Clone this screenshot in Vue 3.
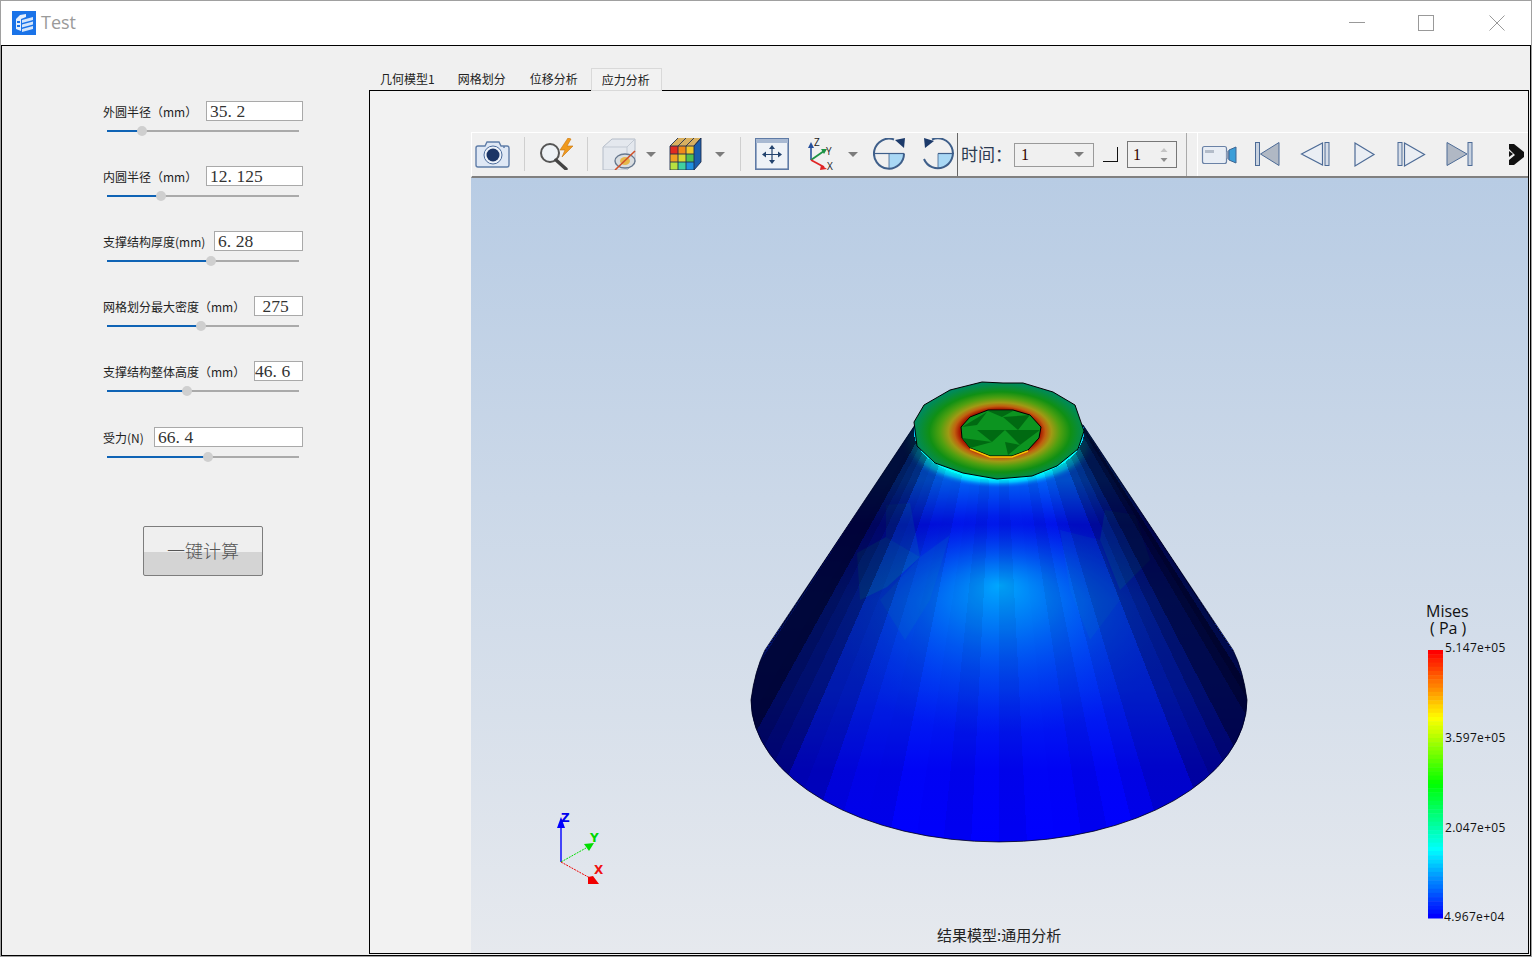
<template>
  <div class="window">
    <header class="titlebar">
      <svg class="app-icon" viewBox="0 0 24 24" width="24" height="24">
        <rect width="24" height="24" fill="#1a73e8" />
        <path d="M4 8 L8 4 L14 3 L14 6 L9 8 L9 20 L4 18 Z" fill="#e6f0fd" />
        <path d="M5 10h3v2h-3zM5 14h3v2h-3z" fill="#1a73e8" />
        <path d="M10 9 L21 6 L21 9 L10 12 Z M10 13.500 L21 10.500 L21 13.500 L10 16.500 Z M10 18 L21 15 L21 18 L10 21 Z" fill="#d5e6fb" />
      </svg>
      <span class="app-title">Test</span>
      <div class="win-controls">
        <svg viewBox="0 0 16 16" width="16" height="16"><path d="M0 7.5H16" stroke="#999" fill="none" /></svg>
        <svg viewBox="0 0 16 16" width="16" height="16"><rect x="0.5" y="0.5" width="15" height="15" stroke="#999" fill="none" /></svg>
        <svg viewBox="0 0 16 16" width="16" height="16"><path d="M0.5 0.5L15.5 15.5M15.5 0.5L0.5 15.5" stroke="#999" fill="none" /></svg>
      </div>
    </header>

    <div class="client">
      <aside class="params">
        <div v-for="p in params" :key="p.label" class="param">
          <div class="param-head">
            <label class="param-label">{{ p.label }}</label>
            <div class="param-input" :style="{ width: p.inputWidth + 'px', paddingLeft: p.pad + 'px' }">
              <template v-if="p.frac">{{ p.whole }}<span class="pt">.</span>{{ p.frac }}</template>
              <template v-else>{{ p.whole }}</template>
            </div>
          </div>
          <div class="slider" :style="{ '--pos': p.pos + 'px' }">
            <span class="thumb"></span>
          </div>
        </div>
        <button class="calc-btn">一键计算</button>
      </aside>

      <section class="results">
        <nav class="tabs">
          <span v-for="t in tabs" :key="t" class="tab" :class="{ active: t === '应力分析' }">{{ t }}</span>
        </nav>
        <div class="pane">
          <div class="viewer">
            <div class="toolbar">
              <div class="tools">
                <svg viewBox="475 138 36 32" width="36" height="32">
                  <path d="M478 146h7l2-4h12l2 4h6a2 2 0 0 1 2 2v17a2 2 0 0 1-2 2h-29a2 2 0 0 1-2-2v-17a2 2 0 0 1 2-2z" fill="#dfe8f5" stroke="#5f7da8" stroke-width="1.4" />
                  <circle cx="493" cy="155" r="9" fill="#eef3fa" stroke="#4c6c9c" />
                  <circle cx="493" cy="155" r="6.5" fill="#1b3566" />
                  <circle cx="504" cy="147" r="1" fill="#5f7da8" />
                </svg>
                <i class="sep"></i>
                <svg viewBox="537 138 40 32" width="40" height="32">
                  <circle cx="550" cy="153" r="9" fill="#eef2f6" stroke="#555" stroke-width="2" />
                  <path d="M556 160L566 169" stroke="#444" stroke-width="3.4" stroke-linecap="round" />
                  <path d="M568 138L560 150h5l-3 7 11-11h-6l4-7z" fill="#f09a1c" stroke="#c8730d" stroke-width=".6" />
                </svg>
                <i class="sep"></i>
                <svg viewBox="600 138 38 32" width="38" height="32">
                  <path d="M603 147l9-8h23v23l-8 8h-24z" fill="#e4e8ee" stroke="#b4bcc8" />
                  <path d="M603 147h24v23M627 147l8-8" fill="none" stroke="#c2c9d3" />
                  <ellipse cx="625" cy="161" rx="10" ry="7" fill="#d9dde0" stroke="#67788f" stroke-width="1.4" />
                  <ellipse cx="625" cy="161" rx="5" ry="4" fill="#e6b84c" />
                  <path d="M615 170L635 151" stroke="#d0512a" stroke-width="1.6" />
                </svg>
                <svg class="drop drop-a" viewBox="0 0 10 5" width="10" height="5"><path d="M0 0h10l-5 5z" fill="#7c7c7c" /></svg>
                <svg viewBox="670 138 36 32" width="36" height="32">
                  <path d="M672 146l8-8h23l-7 8z" fill="#d8b060" />
                  <path d="M696 146l7-8v24l-7 8z" fill="#1b5fae" />
                  <rect v-for="c in cubeCells" :key="c.x + '-' + c.y" :x="c.x" :y="c.y" width="8" height="8" :fill="c.fill" />
                  <path d="M672 146h24v24h-24zM680 146v24M688 146v24M672 154h24M672 162h24M680 138l-8 8M688 138l-8 8M696 138l-8 8M703 138l-7 8M696 146l7-8v24l-7 8" fill="none" stroke="#20304e" stroke-width=".9" />
                </svg>
                <svg class="drop drop-b" viewBox="0 0 10 5" width="10" height="5"><path d="M0 0h10l-5 5z" fill="#7c7c7c" /></svg>
                <i class="sep"></i>
                <svg viewBox="755 138 34 32" width="34" height="32">
                  <rect x="755.8" y="138.8" width="32.4" height="30.4" fill="#eef2f7" stroke="#5f7ba6" stroke-width="1.6" />
                  <rect x="756" y="139" width="32" height="4" fill="#a8b9d2" />
                  <path d="M772 148v13M765 154.500h14" stroke="#23436e" stroke-width="1.2" />
                  <path d="M772 145l-3 4h6zM772 164l-3-4h6zM762 154.500l4-3v6zM782 154.500l-4-3v6z" fill="#23436e" />
                </svg>
                <svg class="axes-icon" viewBox="806 136 34 36" width="34" height="36">
                  <path d="M811 160V145" stroke="#27509c" stroke-width="1.6" />
                  <path d="M811 142l-3 6h6z" fill="#27509c" />
                  <path d="M811 160L824 151" stroke="#1d9345" stroke-width="1.8" />
                  <path d="M827 149l-6 0 3 5z" fill="#1d9345" />
                  <path d="M811 160L824 167" stroke="#e02525" stroke-width="1.8" />
                  <path d="M827 169l-6-4-1 5z" fill="#e02525" />
                  <text x="814" y="146" class="axis-tiny">Z</text>
                  <text x="826" y="155" class="axis-tiny">Y</text>
                  <text x="827" y="170" class="axis-tiny">X</text>
                </svg>
                <svg class="drop drop-c" viewBox="0 0 10 5" width="10" height="5"><path d="M0 0h10l-5 5z" fill="#7c7c7c" /></svg>
                <svg class="rot-a" viewBox="872 138 34 32" width="34" height="32">
                  <path d="M888 153.500H903A15 15 0 0 1 888 168.500Z" fill="#a9d8f5" />
                  <path d="M873 153.500H903" stroke="#3f5f8a" stroke-width="1.2" />
                  <path d="M888 153.500V168" stroke="#3f5f8a" stroke-width=".8" />
                  <path d="M893 139.500A15 15 0 1 0 903 153.500" fill="none" stroke="#3f5f8a" stroke-width="2" />
                  <path d="M903 148l1-10-10 2z" fill="#1c3a6a" />
                </svg>
                <svg class="rot-b" viewBox="921 138 34 32" width="34" height="32">
                  <path d="M937 153.500H952A15 15 0 0 1 937 168.500Z" fill="#a9d8f5" />
                  <path d="M937 153.500H953" stroke="#3f5f8a" stroke-width="1.2" />
                  <path d="M937 153.500V168" stroke="#3f5f8a" stroke-width=".8" />
                  <path d="M931 139.500A15 15 0 1 1 923 159" fill="none" stroke="#3f5f8a" stroke-width="2" />
                  <path d="M924 148l-1-10 10 3z" fill="#1c3a6a" />
                </svg>
              </div>

              <div class="time-group">
                <span class="time-label">时间：</span>
                <div class="combo">
                  <span>1</span>
                  <svg viewBox="0 0 10 5" width="10" height="5"><path d="M0 0h10l-5 5z" fill="#7c7c7c" /></svg>
                </div>
                <span class="step-mark"></span>
                <div class="spin">
                  <span>1</span>
                  <svg viewBox="0 0 8 14" width="8" height="14"><path d="M4 0l3.500 4h-7z" fill="#c4c4c4" /><path d="M4 14l3.500-4h-7z" fill="#8c8c8c" /></svg>
                </div>
              </div>

              <div class="player">
                <svg viewBox="1202 138 37 32" width="37" height="32">
                  <rect x="1203.500" y="146.500" width="24" height="17" rx="2" fill="#e8edf4" stroke="#6a82a6" stroke-width="1.2" />
                  <rect x="1206" y="150" width="9" height="3" fill="#b3bcc9" />
                  <path d="M1227 152l3-2v10l-3-2z" fill="#8a9ab4" />
                  <path d="M1230 150l7-3v16l-7-3z" fill="#3b9ed8" stroke="#3f6592" />
                </svg>
                <svg class="nav-first" viewBox="1254 138 28 32" width="28" height="32">
                  <rect x="1256.500" y="142.500" width="4" height="23" fill="#c8d2e0" stroke="#4d6b96" />
                  <path d="M1261.500 154L1280 142.500V165.500Z" fill="#b0b8c4" stroke="#4d6b96" />
                </svg>
                <svg class="nav-prev" viewBox="1301 138 30 32" width="30" height="32">
                  <path d="M1302.500 154L1323.500 143V165Z" fill="#eaeef4" stroke="#4d6b96" stroke-width="1.2" />
                  <rect x="1326" y="142.500" width="4" height="23" fill="#d6dde8" stroke="#4d6b96" />
                </svg>
                <svg class="nav-play" viewBox="1354 138 23 32" width="23" height="32">
                  <path d="M1356 143L1375 154.500L1356 166Z" fill="#eaeef4" stroke="#4d6b96" stroke-width="1.2" />
                </svg>
                <svg class="nav-next" viewBox="1398 138 29 32" width="29" height="32">
                  <rect x="1399" y="142.500" width="4" height="23" fill="#d6dde8" stroke="#4d6b96" />
                  <path d="M1405.500 143L1425.500 154.500L1405.500 166Z" fill="#eaeef4" stroke="#4d6b96" stroke-width="1.2" />
                </svg>
                <svg class="nav-last" viewBox="1447 138 27 32" width="27" height="32">
                  <path d="M1448 142.500L1468 154L1448 165.500Z" fill="#b0b8c4" stroke="#4d6b96" />
                  <rect x="1469" y="142.500" width="4" height="23" fill="#c8d2e0" stroke="#4d6b96" />
                </svg>
                <svg class="nav-more" viewBox="1510 138 15 32" width="15" height="32">
                  <path d="M1510 144h5l10 8v5l-10 8h-5v-5l6-5-6-6z" fill="#111" />
                  <path d="M1510 151l4 3-4 3z" fill="#111" />
                </svg>
              </div>
            </div>

            <div class="canvas">
              <svg viewBox="471 178 1057 775" width="1057" height="775" class="scene">
                <defs>
                  <clipPath id="coneClip"><path :d="conePath" /></clipPath>
                  <linearGradient id="coneBase" gradientUnits="userSpaceOnUse" x1="0" y1="440" x2="0" y2="842">
                    <stop offset="0.1" stop-color="#0060f4" />
                    <stop offset="0.21" stop-color="#0010ea" />
                    <stop offset="0.4" stop-color="#0034ee" />
                    <stop offset="0.62" stop-color="#0026f0" />
                    <stop offset="0.82" stop-color="#0004f6" />
                    <stop offset="1" stop-color="#0000ff" />
                  </linearGradient>
                  <radialGradient id="coneGlow" gradientUnits="userSpaceOnUse" cx="0" cy="0" fx="0" fy="-0.36" r="1" gradientTransform="translate(1000 625) scale(175 110)">
                    <stop offset="0" stop-color="#00a8ff" />
                    <stop offset="0.3" stop-color="#0090f8" stop-opacity="0.7" />
                    <stop offset="1" stop-color="#0040f0" stop-opacity="0" />
                  </radialGradient>
                  <radialGradient id="ringGlow" gradientUnits="userSpaceOnUse" cx="0" cy="0" r="1" gradientTransform="translate(999 442) scale(100 46)">
                    <stop offset="0.8" stop-color="#00ffff" />
                    <stop offset="0.88" stop-color="#00c0ff" />
                    <stop offset="1" stop-color="#0060f4" stop-opacity="0" />
                  </radialGradient>
                  <radialGradient id="ringFill" gradientUnits="userSpaceOnUse" cx="0" cy="0" r="1" gradientTransform="translate(1000 432) scale(86 49)">
                    <stop offset="0.47" stop-color="#a81800" />
                    <stop offset="0.53" stop-color="#c06010" />
                    <stop offset="0.6" stop-color="#a09a14" />
                    <stop offset="0.7" stop-color="#50a010" />
                    <stop offset="0.82" stop-color="#109014" />
                    <stop offset="1" stop-color="#008a5c" />
                  </radialGradient>
                </defs>

                <g clip-path="url(#coneClip)">
                  <rect x="740" y="380" width="520" height="470" fill="url(#coneBase)" />
                  <rect x="740" y="490" width="520" height="300" fill="url(#coneGlow)" />
                  <rect x="860" y="400" width="280" height="100" fill="url(#ringGlow)" />
                  <polygon v-for="(f, i) in facets" :key="'f' + i" :points="f.points" :fill="f.fill" :opacity="f.opacity" />
                  <g shape-rendering="crispEdges">
                    <polygon v-for="s in strips" :key="s.id" :points="s.points" fill="#00001c" :opacity="s.alpha" />
                  </g>
                </g>
                <path :d="conePath" fill="none" stroke="#000018" stroke-width="0.8" />

                <polygon :points="ringOuter" fill="url(#ringFill)" stroke="#000" stroke-width="1" />
                <polygon :points="hole" fill="#0c9420" stroke="#000" stroke-width="1" />
                <polygon v-for="(t, i) in holeDark" :key="'h' + i" :points="t" fill="#006a12" />
                <polyline points="970,449 990,457 1012,457 1028,451" fill="none" stroke="#f8c800" stroke-width="1.4" />

                <g class="triad">
                  <path d="M561 862V826" stroke="#0000ff" stroke-width="1.4" />
                  <path d="M561 817l-4 11h8z" fill="#0000ff" />
                  <path d="M561 862L586 848" stroke="#00e000" stroke-dasharray="2 1" />
                  <path d="M584 844l10-1-5 8z" fill="#00dd00" />
                  <path d="M561 862L590 878" stroke="#f00000" stroke-dasharray="2 1" />
                  <path d="M588 877l5-1 6 8h-11z" fill="#f00000" />
                  <text x="561" y="822" class="axis-label" fill="#0000ee">Z</text>
                  <text x="590" y="842" class="axis-label" fill="#00d800">Y</text>
                  <text x="594" y="874" class="axis-label" fill="#f01010">X</text>
                </g>

                <g class="legend">
                  <rect v-for="b in bands" :key="b.y" x="1428" :y="b.y" width="15" :height="b.h" :fill="b.fill" />
                  <text class="legend-title"><tspan x="1426" y="617">Mises</tspan><tspan x="1430" y="634">( Pa )</tspan></text>
                  <text x="1445" y="652" class="legend-value">5.147e+05</text>
                  <text x="1445" y="742" class="legend-value">3.597e+05</text>
                  <text x="1445" y="832" class="legend-value">2.047e+05</text>
                  <text x="1444" y="921" class="legend-value">4.967e+04</text>
                </g>

                <text x="937" y="941" class="model-caption">结果模型:通用分析</text>
              </svg>
            </div>
          </div>
        </div>
      </section>
    </div>
  </div>
</template>

<script setup>
const params = [
  { label: '外圆半径（mm）', whole: '35', frac: '2', inputWidth: 97, pos: 35, pad: 3 },
  { label: '内圆半径（mm）', whole: '12', frac: '125', inputWidth: 97, pos: 54, pad: 3 },
  { label: '支撑结构厚度(mm)', whole: '6', frac: '28', inputWidth: 89, pos: 104, pad: 3 },
  { label: '网格划分最大密度（mm）', whole: '\u00a0275', frac: '', inputWidth: 49, pos: 94, pad: 3 },
  { label: '支撑结构整体高度（mm）', whole: '46', frac: '6', inputWidth: 49, pos: 80, pad: 0 },
  { label: '受力(N)', whole: '66', frac: '4', inputWidth: 149, pos: 101, pad: 3 },
]

const tabs = ['几何模型1', '网格划分', '位移分析', '应力分析']

const cubeColors = [
  '#e02b20', '#f08a1a', '#f2c82a',
  '#f0a020', '#d8d830', '#50c050',
  '#b8e040', '#40d0a0', '#2090e0',
]
const cubeCells = cubeColors.map((fill, i) => ({
  x: 672 + (i % 3) * 8,
  y: 146 + Math.floor(i / 3) * 8,
  fill,
}))

// colour bar, red at the top to blue at the bottom
const bandCount = 64
const bands = Array.from({ length: bandCount }, (_, i) => {
  const step = 268 / bandCount
  return {
    y: 650 + i * step,
    h: step + 0.5,
    fill: `hsl(${Math.round((i / (bandCount - 1)) * 240)}, 100%, 50%)`,
  }
})

const conePath =
  'M915 425 L765 650 Q755 670 751 700 A248 142 0 0 0 1247 700 Q1243 670 1233 650 L1083 425 Z'

const ringOuter =
  '982,382 1003,383 1023,383 1053,392 1075,405 1084,431 1078,449 1057,466 1032,476 997,479 963,473 935,463 917,446 914,422 924,405 950,390'

const hole =
  '988,410 1013,410 1030,415 1041,427 1039,438 1028,450 1012,456 990,456 970,448 962,438 961,427 970,417'

const holeDark = [
  '988,411 1013,411 1002,417',
  '962,427 987,412 977,425',
  '1003,417 1030,415 1018,430',
  '977,430 1005,430 992,442',
  '1005,430 1040,430 1020,445',
  '962,438 992,442 970,448',
  '1005,442 1020,445 1008,455',
]

const facets = [
  { points: '857,553 886,537 920,557 887,587 860,600', fill: '#00a8b8', opacity: 0.3 },
  { points: '886,505 910,503 920,557 886,537', fill: '#00a0c0', opacity: 0.2 },
  { points: '920,557 950,535 930,600 905,640 880,600', fill: '#0090d0', opacity: 0.16 },
  { points: '1105,510 1135,515 1150,560 1120,590 1100,540', fill: '#00a8b8', opacity: 0.26 },
  { points: '1060,530 1100,540 1120,600 1090,640 1070,590', fill: '#0090d0', opacity: 0.12 },
]

// darkened quads running from the ring to the base, stronger towards the edges
const stripCount = 36
const wobble = [0, 0.05, -0.03, 0.06, 0.01, -0.04, 0.05, 0]
const startAngle = -0.45
const sweep = Math.PI + 0.9
const strips = Array.from({ length: stripCount }, (_, i) => {
  const a0 = startAngle + (i / stripCount) * sweep
  const a1 = startAngle + ((i + 1) / stripCount) * sweep
  const mid = (a0 + a1) / 2
  const pt = (a, rx, ry, cy) => `${(999 + rx * Math.cos(a)).toFixed(1)},${(cy + ry * Math.sin(a)).toFixed(1)}`
  return {
    id: i,
    points: [pt(a0, 85, 48, 432), pt(a1, 85, 48, 432), pt(a1, 249, 143, 700), pt(a0, 249, 143, 700)].join(' '),
    alpha: Math.max(0, Math.pow(Math.abs(Math.cos(mid)), 4.5) * 0.86 + wobble[i % 8]).toFixed(3),
  }
})
</script>

<style scoped>
.window {
  width: 1532px;
  height: 957px;
  box-sizing: border-box;
  border: 1px solid #a0a0a0;
  background: #fff;
  display: flex;
  flex-direction: column;
  font-family: "Noto Sans CJK SC", sans-serif;
}

.titlebar {
  height: 44px;
  flex: none;
  display: flex;
  align-items: center;
  padding-left: 11px;
}

.app-icon {
  margin-top: -1px;
}

.app-title {
  margin: -2px 0 0 5px;
  font-family: "Open Sans", sans-serif;
  font-size: 18px;
  color: #9a9a9a;
}

.win-controls {
  margin-left: auto;
  display: flex;
  gap: 54px;
  padding-right: 26px;
}

.win-controls svg:nth-child(2) {
  margin: 0 1px 0 -1px;
}

.client {
  flex: 1;
  min-height: 0;
  display: flex;
  border: 1px solid #000;
  background: #f0f0f0;
}

.params {
  width: 367px;
  flex: none;
  box-sizing: border-box;
  padding: 55px 66px 0 101px;
}

.param {
  margin-bottom: 34px;
}

.param:nth-child(6) {
  padding-top: 1px;
  margin-bottom: 68px;
}

.param-head {
  height: 20px;
  display: flex;
  align-items: center;
}

.param-label {
  flex: 1;
  font-size: 12px;
  color: #222;
  white-space: nowrap;
}

.param-input {
  height: 20px;
  flex: none;
  box-sizing: border-box;
  border: 1px solid #a9a9a9;
  background: #fff;
  font-family: "Liberation Serif", serif;
  font-size: 17.5px;
  line-height: 19px;
  color: #333;
  white-space: nowrap;
  overflow: hidden;
}

.pt {
  display: inline-block;
  width: 9px;
}

.slider {
  position: relative;
  width: 192px;
  height: 2px;
  margin: 9px 0 0 4px;
  background: linear-gradient(to right, #0f63b5 var(--pos), #aaa var(--pos));
}

.thumb {
  position: absolute;
  left: var(--pos);
  top: -4px;
  width: 10px;
  height: 10px;
  margin-left: -5px;
  border-radius: 50%;
  background: #cfcfcf;
}

.calc-btn {
  display: block;
  width: 120px;
  height: 50px;
  margin-left: 40px;
  padding: 0 0 3px;
  box-sizing: border-box;
  border: 1px solid #7d7d7d;
  border-radius: 2px;
  background: linear-gradient(to bottom, #efefef 52%, #d4d4d4 52%);
  font-family: "Liberation Serif", "Noto Sans CJK SC", serif;
  font-size: 18px;
  font-weight: 300;
  color: #555;
}

.results {
  flex: 1;
  min-width: 0;
  display: flex;
  flex-direction: column;
  padding: 22px 1px 1px 0;
  background: #f0f0f0;
}

.tabs {
  height: 22px;
  flex: none;
  display: flex;
}

.tab {
  padding: 0 12px;
  font-size: 12px;
  line-height: 22px;
  color: #222;
}

.tab:first-child {
  padding: 0 11px;
}

.tab.active {
  box-sizing: border-box;
  height: 23px;
  position: relative;
  z-index: 1;
  margin-left: 1px;
  border: 1px solid #d9d9d9;
  padding: 0 11px 0 10px;
  background: #f2f2f2;
}

.pane {
  flex: 1;
  min-height: 0;
  box-sizing: border-box;
  border: 1px solid #000;
  background: #f2f2f2;
  padding: 41px 0 0 101px;
}

.viewer {
  height: 100%;
  display: flex;
  flex-direction: column;
}

.toolbar {
  height: 46px;
  flex: none;
  box-sizing: border-box;
  display: flex;
  align-items: flex-start;
  border-top: 1px solid #fff;
  border-left: 1px solid #fff;
  border-bottom: 2px solid #808080;
  background: #f0f0f0;
}

.tools {
  width: 486px;
  height: 43px;
  flex: none;
  display: flex;
  align-items: flex-start;
  padding-top: 5px;
  box-sizing: border-box;
  border-right: 1px solid #666;
}

.tools svg {
  flex: none;
  display: block;
}

.tools > svg:first-child {
  margin-left: 3px;
}

.sep {
  flex: none;
  width: 1px;
  height: 34px;
  margin: -1px 0 0 0;
  background: #cfcfcf;
}

.sep:nth-of-type(1) {
  margin-left: 13px;
  margin-right: 12px;
}

.sep:nth-of-type(2) {
  margin-left: 10px;
  margin-right: 12px;
}

.sep:nth-of-type(3) {
  margin-left: 11px;
  margin-right: 14px;
}

.tools .drop {
  margin-top: 14px;
}

.tools .drop-a {
  margin-left: 8px;
  margin-right: 12px;
}

.tools .drop-b {
  margin-left: 11px;
  margin-right: 4px;
}

.tools .drop-c {
  margin-left: 8px;
  margin-right: 4px;
}

.tools .axes-icon {
  margin: -2px 0 0 17px;
}

.tools .rot-a {
  margin-left: 11px;
}

.tools .rot-b {
  margin-left: 15px;
}

.time-group {
  width: 229px;
  height: 43px;
  flex: none;
  box-sizing: border-box;
  display: flex;
  align-items: center;
  padding-left: 3px;
  border-right: 1px solid #aaa;
}

.time-label {
  width: 53px;
  flex: none;
  margin-top: -2px;
  font-family: "Liberation Serif", "Noto Sans CJK SC", serif;
  font-size: 17px;
  color: #2c3a50;
  white-space: nowrap;
}

.combo,
.spin {
  flex: none;
  box-sizing: border-box;
  display: flex;
  align-items: center;
  justify-content: space-between;
  font-family: "Liberation Serif", serif;
  font-size: 16px;
  color: #300;
}

.combo {
  width: 80px;
  height: 24px;
  padding: 0 9px 0 6px;
  border: 1px solid #9a9a9a;
}

.step-mark {
  flex: none;
  box-sizing: border-box;
  width: 15px;
  height: 15px;
  margin: 0 9px;
  border-right: 1px solid #111;
  border-bottom: 1px solid #111;
}

.spin {
  width: 50px;
  height: 27px;
  padding: 0 8px 0 5px;
  border: 1px solid #777;
}

.player {
  width: 327px;
  height: 43px;
  flex: none;
  margin-left: 10px;
  box-sizing: border-box;
  display: flex;
  align-items: flex-start;
  padding-top: 5px;
  border-left: 1px solid #fff;
}

.player svg {
  flex: none;
  display: block;
}

.player > svg:first-child {
  margin-left: 3px;
}

.nav-first {
  margin-left: 15px;
}

.nav-prev {
  margin-left: 19px;
}

.nav-play {
  margin-left: 23px;
}

.nav-next {
  margin-left: 21px;
}

.nav-last {
  margin-left: 20px;
}

.nav-more {
  margin-left: 36px;
}

.canvas {
  flex: 1;
  min-height: 0;
  background: linear-gradient(to bottom, #b8cce4, #e6e9ee);
  overflow: hidden;
}

.scene {
  display: block;
}

.axis-tiny {
  font-family: "Open Sans", sans-serif;
  font-size: 10px;
  fill: #222;
}

.axis-label {
  font-family: "DejaVu Sans", sans-serif;
  font-size: 12px;
  font-weight: 700;
}

.legend-title {
  font-family: "Open Sans", sans-serif;
  font-size: 16px;
  fill: #111;
}

.legend-value {
  font-family: "Open Sans", sans-serif;
  font-size: 12px;
  letter-spacing: 0.3px;
  fill: #111;
}

.model-caption {
  font-family: "Noto Sans CJK SC", sans-serif;
  font-size: 15px;
  fill: #222;
}
</style>
